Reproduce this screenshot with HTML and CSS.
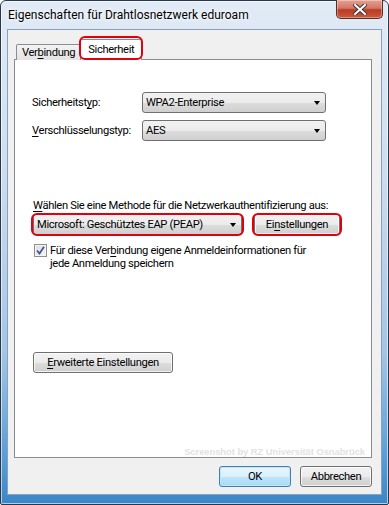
FILE: index.html
```html
<!DOCTYPE html>
<html lang="de">
  <head>
    <meta charset="UTF-8" />
    <title>Eigenschaften für Drahtlosnetzwerk eduroam</title>
    <link rel="stylesheet" href="styles.css">
  </head>
  <body>
    <div class="window">
      <div class="titlebar">
        <span class="title">Eigenschaften für Drahtlosnetzwerk eduroam</span>
        <button class="close" aria-label="Schließen">
          <svg width="14" height="11" viewBox="0 0 14 11">
            <path d="M2 1 L12 10 M12 1 L2 10" stroke="#3b3b3b" stroke-width="4" stroke-linecap="square" />
            <path d="M2 1 L12 10 M12 1 L2 10" stroke="#ffffff" stroke-width="2" stroke-linecap="square" />
          </svg>
        </button>
      </div>

      <div class="client">
        <div class="tabs">
          <div class="tab">Ver<u>b</u>indung</div>
          <div class="tab tab-active mark mark-tab">Sicherheit</div>
        </div>

        <div class="panel">
          <div class="row">
            <span class="label">Sicherheitst<u>y</u>p:</span>
            <div class="combo combo-wide">WPA2-Enterprise</div>
          </div>
          <div class="row">
            <span class="label"><u>V</u>erschlüsselungstyp:</span>
            <div class="combo combo-wide">AES</div>
          </div>

          <p class="method-label"><u>W</u>ählen Sie eine Methode für die Netzwerkauthentifizierung aus:</p>
          <div class="method-row">
            <div class="combo combo-method mark">Microsoft: Geschütztes EAP (PEAP)</div>
            <button class="btn btn-settings mark">Ei<u>n</u>stellungen</button>
          </div>

          <label class="check">
            <span class="box">
              <svg width="9" height="9" viewBox="0 0 9 9">
                <path d="M1 4.5 L3.5 7.5 L8 0.8" fill="none" stroke="#3d5894" stroke-width="1.8" />
              </svg>
            </span>
            <span class="check-text">Für diese Ver<u>b</u>indung eigene Anmeldeinformationen für<br>jede Anmeldung speichern</span>
          </label>

          <button class="btn btn-advanced"><u>E</u>rweiterte Einstellungen</button>

          <div class="watermark">Screenshot by RZ Universität Osnabrück</div>
        </div>

        <div class="footer">
          <button class="btn btn-default">OK</button>
          <button class="btn">Abbrechen</button>
        </div>
      </div>
    </div>
  </body>
</html>
```

FILE: styles.css
```css
:root {
  --color-client: #f0f0f0;
  --color-border: #898c95;
  --color-button-border: #707070;
  --color-mark: #e2000e;
  --color-text: #000000;
}

* {
  box-sizing: border-box;
}

body {
  margin: 0;
  font-family: Roboto, "Noto Sans", sans-serif;
  font-size: 11.2px;
  letter-spacing: -0.35px;
  color: var(--color-text);
}

u {
  text-decoration-thickness: 1px;
  text-underline-offset: 2px;
}

.window {
  width: 389px;
  height: 505px;
  display: flex;
  flex-direction: column;
  border: 1px solid #27384d;
  border-radius: 6px 6px 2px 2px;
  padding: 0 6px 9px;
  background: linear-gradient(#e1ebf6 0%, #cddcee 35%, #a3c5e6 70%, #5b9fd8 90%, #3a86c7 100%);
  box-shadow: inset 0 0 0 1px rgba(255, 255, 255, 0.6);
}

.titlebar {
  height: 28px;
  display: flex;
  align-items: flex-start;
  justify-content: space-between;
}

.title {
  font-size: 12px;
  letter-spacing: 0;
  margin: 7px 0 0 1px;
  text-shadow: 0 0 6px #ffffff, 0 0 3px #ffffff;
}

.close {
  width: 47px;
  height: 19px;
  margin: -1px -1px 0 0;
  padding: 0;
  display: flex;
  align-items: center;
  justify-content: center;
  border: 1px solid #5b2a22;
  border-top: none;
  border-radius: 0 0 5px 5px;
  background: linear-gradient(#e4a194 0%, #d37766 45%, #bb3a22 55%, #c95a3e 100%);
  box-shadow: inset 0 0 0 1px rgba(255, 255, 255, 0.35);
}

.client {
  flex: 1;
  display: flex;
  flex-direction: column;
  background: var(--color-client);
  border: 1px solid #8aa1bb;
  padding: 0 9px 0 6px;
}

.tabs {
  height: 29px;
  display: flex;
  align-items: flex-end;
  padding-left: 2px;
}

.tab {
  height: 16px;
  padding: 0 5px;
  line-height: 15px;
  border: 1px solid var(--color-border);
  border-bottom: none;
  border-radius: 2px 2px 0 0;
  background: linear-gradient(#f3f3f3, #e3e3e3);
  margin-bottom: -1px;
  position: relative;
  white-space: nowrap;
}

.tab-active {
  height: 21px;
  padding: 2px 7px 0;
  margin-left: -1px;
  background: #ffffff;
  z-index: 1;
}

.panel {
  flex: 1;
  display: flex;
  flex-direction: column;
  align-items: flex-start;
  background: #ffffff;
  border: 1px solid var(--color-border);
  padding: 32px 0 0 17px;
}

.row {
  display: flex;
  align-items: center;
  margin-bottom: 7px;
}

.label {
  width: 110px;
  white-space: nowrap;
}

.combo {
  height: 21px;
  line-height: 19px;
  padding: 0 18px 0 3px;
  border: 1px solid var(--color-button-border);
  border-radius: 3px;
  background: linear-gradient(#f2f2f2 0%, #ebebeb 50%, #dddddd 51%, #cfcfcf 100%);
  position: relative;
  white-space: nowrap;
}

.combo::before {
  content: "";
  position: absolute;
  right: 5px;
  top: 8px;
  border-left: 3.5px solid transparent;
  border-right: 3.5px solid transparent;
  border-top: 4px solid #000000;
}

.combo-wide {
  width: 184px;
}

.method-label {
  margin: 50px 0 1px 1px;
  line-height: 15px;
  white-space: nowrap;
}

.method-row {
  display: flex;
  gap: 12px;
  margin-left: 1px;
}

.combo-method {
  width: 209px;
}

.btn {
  height: 21px;
  padding: 0 6px;
  font: inherit;
  letter-spacing: inherit;
  color: var(--color-text);
  white-space: nowrap;
  border: 1px solid var(--color-button-border);
  border-radius: 3px;
  background: linear-gradient(#f2f2f2 0%, #ebebeb 50%, #dddddd 51%, #cfcfcf 100%);
  box-shadow: inset 0 0 0 1px rgba(255, 255, 255, 0.7);
  position: relative;
}

.btn-settings {
  width: 86px;
}

.mark::after {
  content: "";
  position: absolute;
  inset: -2px -3px;
  border: 2.5px solid var(--color-mark);
  border-radius: 6px;
  pointer-events: none;
}

.mark-tab::after {
  inset: -4px -2px 0;
}

.check {
  display: flex;
  align-items: flex-start;
  gap: 3px;
  margin: 9px 0 0 2px;
  line-height: 13px;
}

.check-text {
  white-space: nowrap;
}

.box {
  flex: none;
  width: 13px;
  height: 13px;
  display: flex;
  align-items: center;
  justify-content: center;
  border: 1px solid #8e8f8f;
  background: linear-gradient(135deg, #dcdcdc, #f6f6f6);
  box-shadow: inset 0 0 0 1px #f4f4f4;
}

.btn-advanced {
  width: 140px;
  margin: 82px 0 0 1px;
}

.watermark {
  margin-top: auto;
  align-self: flex-end;
  margin-right: 6px;
  font-family: "Liberation Sans", Arial, sans-serif;
  font-weight: bold;
  font-size: 9.3px;
  letter-spacing: 0;
  color: #e2e2e2;
}

.footer {
  height: 36px;
  display: flex;
  justify-content: flex-end;
  gap: 9px;
  padding-top: 8px;
}

.footer .btn {
  width: 72px;
}

.btn-default {
  border-color: #3c7fb1;
  background: linear-gradient(#eaf6fd 0%, #d9f0fc 50%, #bee6fd 51%, #a7d9f5 100%);
  box-shadow: inset 0 0 0 1px #c2e4f6;
}
```
